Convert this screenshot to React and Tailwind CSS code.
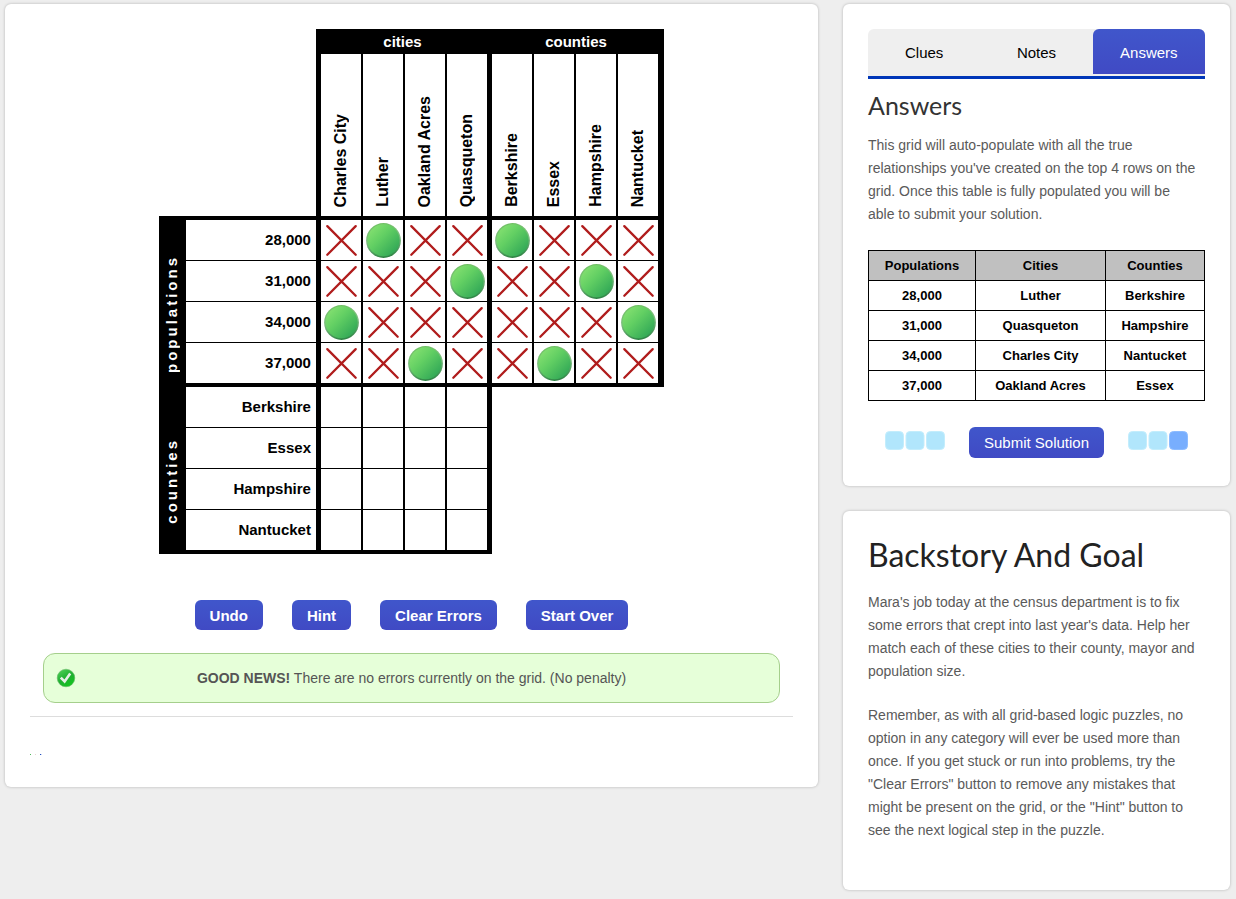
import React, { useState } from "react";

const cities = ["Charles City", "Luther", "Oakland Acres", "Quasqueton"];
const counties = ["Berkshire", "Essex", "Hampshire", "Nantucket"];
const populationRows = [
  { label: "28,000", marks: "XOXXOXXX" },
  { label: "31,000", marks: "XXXOXXOX" },
  { label: "34,000", marks: "OXXXXXXO" },
  { label: "37,000", marks: "XXOXXOXX" },
];
const countyRows = counties.map((label) => ({ label, marks: "    " }));
const answers = [
  ["28,000", "Luther", "Berkshire"],
  ["31,000", "Quasqueton", "Hampshire"],
  ["34,000", "Charles City", "Nantucket"],
  ["37,000", "Oakland Acres", "Essex"],
];

const buttonColors = "bg-linear-to-b from-[#4056cb] to-[#404ac4] text-white";

function Mark({ kind }) {
  if (kind === "X") {
    return (
      <svg viewBox="0 0 35 35" className="size-[35px]" aria-hidden="true">
        <path d="M3.3 3.1 31.7 31.7M31.7 3.1 3.3 31.7" stroke="#b01c1c" strokeWidth="2.3" strokeLinecap="round" fill="none" />
      </svg>
    );
  }
  if (kind === "O") {
    return (
      <svg viewBox="0 0 35 35" className="size-[35px]" aria-hidden="true">
        <circle cx="17.5" cy="17.5" r="17.4" fill="url(#discEdge)" />
        <circle cx="17.5" cy="17.3" r="16" fill="url(#discFace)" />
      </svg>
    );
  }
  return null;
}

function cellBorder(index) {
  if (index === 3) return "border-r-5";
  if (index === 7) return "border-r-6";
  return "border-r-2";
}

function RowGroup({ title, rows }) {
  return (
    <tbody>
      {rows.map((row, r) => {
        const bottom = r === rows.length - 1 ? "border-b-4 h-11" : "border-b h-[41px]";
        return (
          <tr key={row.label}>
            {r === 0 && (
              <th rowSpan={rows.length} scope="rowgroup" className="bg-black p-0 pt-5 text-white">
                <div className="flex justify-center">
                  <span className="rotate-180 text-[15px] leading-5 tracking-[3px] [writing-mode:vertical-rl]">{title}</span>
                </div>
              </th>
            )}
            <th scope="row" className={`border-r-5 border-black p-0 pr-[5px] text-right text-[15px] leading-5 ${bottom}`}>
              {row.label}
            </th>
            {row.marks.split("").map((kind, i) => (
              <td key={i} className={`border-black p-0 ${cellBorder(i)} ${bottom}`}>
                <button
                  type="button"
                  aria-label={`${row.label}, ${[...cities, ...counties][i]}`}
                  className="flex h-10 w-full items-center justify-center pl-px pt-px"
                >
                  <Mark kind={kind} />
                </button>
              </td>
            ))}
          </tr>
        );
      })}
    </tbody>
  );
}

function LogicGrid() {
  return (
    <table className="mx-auto w-[505px] table-fixed border-separate border-spacing-0 font-bold text-black">
      <colgroup>
        <col className="w-[27px]" />
        <col className="w-[135px]" />
        <col className="w-[42px]" />
        <col className="w-[42px]" />
        <col className="w-[42px]" />
        <col className="w-[45px]" />
        <col className="w-[42px]" />
        <col className="w-[42px]" />
        <col className="w-[42px]" />
        <col className="w-[46px]" />
      </colgroup>
      <thead>
        <tr>
          <td colSpan={2} rowSpan={2} className="border-r-5 border-b-4 border-black" />
          <th colSpan={4} scope="colgroup" className="h-[25px] bg-black p-0 pr-2 text-[15px] leading-5 text-white">
            cities
          </th>
          <th colSpan={4} scope="colgroup" className="h-[25px] bg-black p-0 pr-1 text-[15px] leading-5 text-white">
            counties
          </th>
        </tr>
        <tr>
          {[...cities, ...counties].map((name, i) => (
            <th key={name} scope="col" className={`h-[166px] border-b-4 border-black p-0 pb-[9px] align-bottom ${cellBorder(i)}`}>
              <div className="flex justify-center">
                <span className="rotate-180 text-base leading-5 [writing-mode:vertical-rl]">{name}</span>
              </div>
            </th>
          ))}
        </tr>
      </thead>
      <RowGroup title="populations" rows={populationRows} />
      <RowGroup title="counties" rows={countyRows} />
    </table>
  );
}

function Panel({ className, children }) {
  return (
    <section className={`rounded-md bg-white px-[25px] shadow-[0_0_3px_rgba(0,0,0,0.25)] ${className}`}>{children}</section>
  );
}

function Squares({ last }) {
  return (
    <svg viewBox="0 0 60 19" className="h-[19px] w-[60px]" aria-hidden="true">
      <rect x="0.5" y="0.5" width="18" height="18" rx="4" fill="#b1e6fc" stroke="#c3edfc" />
      <rect x="21" y="0.5" width="18" height="18" rx="4" fill="#b1e6fc" stroke="#c3edfc" />
      <rect x="41.5" y="0.5" width="18" height="18" rx="4" fill={last} stroke={last === "#b1e6fc" ? "#c3edfc" : "#8dbcff"} />
    </svg>
  );
}

export default function App() {
  const [tab, setTab] = useState("Answers");
  return (
    <div className="flex min-h-screen items-start gap-[25px] bg-[#eeeeee] pt-1 pr-[6px] pb-2 pl-[5px] font-['Liberation_Sans',Arial,sans-serif] text-[#5a5a5a]">
      <svg width="0" height="0" className="absolute" aria-hidden="true">
        <defs>
          <linearGradient id="discFace" x1="0.1" y1="0.1" x2="0.9" y2="0.9">
            <stop offset="0" stopColor="#84e070" />
            <stop offset="0.4" stopColor="#62cf63" />
            <stop offset="1" stopColor="#2fa656" />
          </linearGradient>
          <linearGradient id="discEdge" x1="0.3" y1="0" x2="0.5" y2="1">
            <stop offset="0" stopColor="#6fc062" />
            <stop offset="0.5" stopColor="#7dbd80" />
            <stop offset="1" stopColor="#2f8445" />
          </linearGradient>
          <linearGradient id="okBadge" x1="0.2" y1="0" x2="0.8" y2="1">
            <stop offset="0" stopColor="#4ccf56" />
            <stop offset="0.5" stopColor="#1fae30" />
            <stop offset="1" stopColor="#10c91c" />
          </linearGradient>
        </defs>
      </svg>

      <main className="min-w-0 flex-1">
        <Panel className="pt-[25px] pb-8">
          <LogicGrid />

          <div className="mt-[46px] flex justify-center gap-[29px]">
            {["Undo", "Hint", "Clear Errors", "Start Over"].map((name) => (
              <button
                key={name}
                type="button"
                className={`h-[30px] rounded-md px-[15px] pt-0.5 text-[15px] leading-5 font-bold ${buttonColors}`}
              >
                {name}
              </button>
            ))}
          </div>

          <div
            role="status"
            className="mx-[13px] mt-[23px] flex h-[50px] items-center rounded-xl border border-[#a5cf8c] bg-[#e6ffd9] px-3 text-sm text-[#555555]"
          >
            <svg viewBox="0 0 20 20" className="size-5 shrink-0" aria-hidden="true">
              <circle cx="10" cy="10" r="8.8" fill="url(#okBadge)" stroke="#67b866" strokeWidth="0.6" />
              <path d="M4.8 9.6 8.6 13.4 14.2 5.6" fill="none" stroke="#e6f0e6" strokeWidth="2.6" />
            </svg>
            <p className="flex-1 pr-5 text-center">
              <strong>GOOD NEWS!</strong> There are no errors currently on the grid. (No penalty)
            </p>
          </div>

          <hr className="mt-[13px] border-[#dddddd]" />

          <svg viewBox="0 0 12 1" className="mt-[37px] block h-px w-3" aria-hidden="true">
            <rect width="1" height="1" fill="#4db85a" />
            <rect x="5" width="1" height="1" fill="#ead5d5" />
            <rect x="10" width="1" height="1" fill="#2450c0" />
            <rect x="11" width="1" height="1" fill="#c9d6f2" />
          </svg>
        </Panel>
      </main>

      <aside className="flex w-[387px] shrink-0 flex-col gap-[25px]">
        <Panel className="pt-[25px] pb-7">
          <div role="tablist" className="grid h-[50px] grid-cols-3 items-start rounded-t-md border-b-3 border-[#0036b8] bg-[#efefef]">
            {["Clues", "Notes", "Answers"].map((name) => (
              <button
                key={name}
                type="button"
                role="tab"
                aria-selected={tab === name}
                onClick={() => setTab(name)}
                className={`h-[45px] rounded-t-md pt-[3px] text-[15px] leading-5 ${tab === name ? buttonColors : "text-black"}`}
              >
                {name}
              </button>
            ))}
          </div>

          <h2 className="mt-[10px] font-[Lato,sans-serif] text-[25px] leading-8 text-[#333333]">Answers</h2>
          <p className="mt-[13px] pr-[7px] text-sm leading-[23px]">
            This grid will auto-populate with all the true relationships you've created on the top 4 rows on the grid. Once this
            table is fully populated you will be able to submit your solution.
          </p>

          <table className="mt-6 w-full table-fixed border-collapse text-center text-[13px] leading-5 font-bold text-black">
            <colgroup>
              <col className="w-[107px]" />
              <col className="w-[130px]" />
              <col />
            </colgroup>
            <thead>
              <tr className="bg-[#c0c0c0]">
                {["Populations", "Cities", "Counties"].map((name) => (
                  <th key={name} scope="col" className="h-[30px] border border-black p-0">
                    {name}
                  </th>
                ))}
              </tr>
            </thead>
            <tbody>
              {answers.map((row) => (
                <tr key={row[0]}>
                  {row.map((value) => (
                    <td key={value} className="h-[30px] border border-black p-0">
                      {value}
                    </td>
                  ))}
                </tr>
              ))}
            </tbody>
          </table>

          <div className="mt-[26px] flex items-start justify-center gap-6">
            <div className="pt-1">
              <Squares last="#b1e6fc" />
            </div>
            <button type="button" className={`h-[31px] rounded-md px-[15px] text-[15px] leading-5 ${buttonColors}`}>
              Submit Solution
            </button>
            <div className="pt-1">
              <Squares last="#78aefe" />
            </div>
          </div>
        </Panel>

        <Panel className="pt-6 pb-12">
          <h2 className="font-[Lato,sans-serif] text-[32px] leading-10 text-[#222222]">Backstory And Goal</h2>
          <p className="mt-4 pr-[7px] text-sm leading-[23px]">
            Mara's job today at the census department is to fix some errors that crept into last year's data. Help her match each
            of these cities to their county, mayor and population size.
          </p>
          <p className="mt-[21px] pr-[7px] text-sm leading-[23px]">
            Remember, as with all grid-based logic puzzles, no option in any category will ever be used more than once. If you
            get stuck or run into problems, try the "Clear Errors" button to remove any mistakes that might be present on the
            grid, or the "Hint" button to see the next logical step in the puzzle.
          </p>
        </Panel>
      </aside>
    </div>
  );
}
